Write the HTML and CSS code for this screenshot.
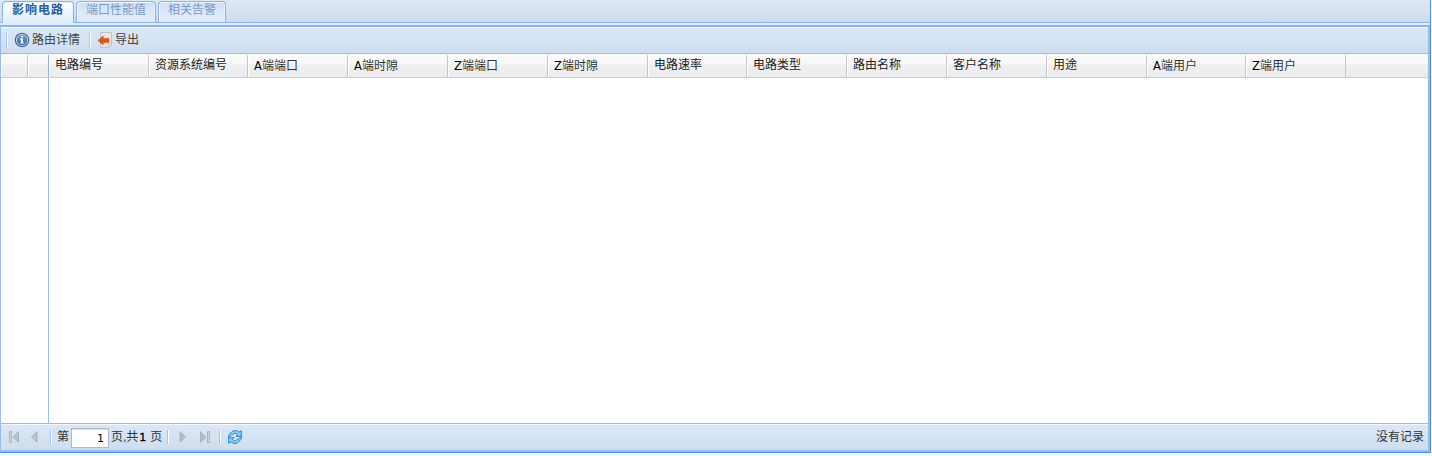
FILE: index.html
```html
<!DOCTYPE html>
<html lang="zh-CN">
<head>
<meta charset="utf-8">
<title>影响电路</title>
<link rel="stylesheet" href="styles.css">
</head>
<body>
<div class="window">
  <nav class="tabs">
    <div class="tab active">影响电路</div>
    <div class="tab t2">端口性能值</div>
    <div class="tab t3">相关告警</div>
  </nav>
  <div class="strip"></div>
  <main class="panel">
    <div class="toolbar">
      <i class="sep first"></i>
      <svg class="info" width="16" height="16" viewBox="0 0 16 16">
        <defs><linearGradient id="ig" x1="0" y1="0" x2="0" y2="1"><stop offset="0" stop-color="#6f9bc8"/><stop offset="1" stop-color="#3a70a8"/></linearGradient></defs>
        <circle cx="8" cy="8" r="6.7" fill="#c3d6e9" stroke="#3e689a" stroke-width="1.1"/>
        <circle cx="8" cy="8" r="5.2" fill="url(#ig)"/>
        <path d="M7 4h2v1.600H7zM6.200 6.600H9V10.500h.9v1.100H6.200v-1.100H7V7.700h-.8z" fill="#fff"/>
      </svg>
      <span class="label">路由详情</span>
      <i class="sep second"></i>
      <svg class="export" width="16" height="16" viewBox="0 0 16 16">
        <path d="M3.500.5h11v11.500l-3 3.500h-8z" fill="#e9e6e4" stroke="#c2c0c0"/>
        <path d="M14.500 12h-3v3.500z" fill="#fff" stroke="#b4b3b2" stroke-width=".7"/>
        <path d="M1 8.500 6.200 4V6.500H12v4H6.200V13z" fill="#e0561c" stroke="#c64a1c" stroke-width=".5"/>
      </svg>
      <span class="label">导出</span>
    </div>
    <div class="head">
      <div class="th"></div><div class="th lock"></div>
      <div class="th">电路编号</div><div class="th">资源系统编号</div>
      <div class="th low"><span class="latin">A</span>端端口</div><div class="th low"><span class="latin">A</span>端时隙</div>
      <div class="th low"><span class="latin">Z</span>端端口</div><div class="th low"><span class="latin">Z</span>端时隙</div>
      <div class="th">电路速率</div><div class="th">电路类型</div>
      <div class="th">路由名称</div><div class="th">客户名称</div>
      <div class="th">用途</div><div class="th low"><span class="latin">A</span>端用户</div>
      <div class="th low"><span class="latin">Z</span>端用户</div>
    </div>
    <div class="body"><div class="locked"></div></div>
    <footer class="pager">
      <svg class="first-page" width="10" height="12" viewBox="0 0 10 12"><path d="M.5.5h2v11h-2z" fill="#d3d7dc" stroke="#a5aab0" stroke-width=".8"/><path d="M9.500.8v10.400L4 6z" fill="#bdc2c7" stroke="#a0a5ab" stroke-width=".7"/></svg>
      <svg class="prev-page" width="7" height="12" viewBox="0 0 7 12"><path d="M6 .8v10.400L.5 6z" fill="#bdc2c7" stroke="#a0a5ab" stroke-width=".7"/></svg>
      <i class="sep p1"></i>
      <span class="di">第</span>
      <input class="page" value="1">
      <span class="total">页,共<b>1</b>页</span>
      <i class="sep p2"></i>
      <svg class="next-page" width="7" height="12" viewBox="0 0 7 12"><path d="M1 .8v10.400L6.500 6z" fill="#b9bec3" stroke="#a0a5ab" stroke-width=".7"/></svg>
      <svg class="last-page" width="10" height="12" viewBox="0 0 10 12"><path d="M7.500.5h2v11h-2z" fill="#d3d7dc" stroke="#a5aab0" stroke-width=".8"/><path d="M.5.8v10.400L6 6z" fill="#b9bec3" stroke="#a0a5ab" stroke-width=".7"/></svg>
      <i class="sep p3"></i>
      <svg class="refresh" width="14" height="14" viewBox="0 0 14 14">
        <g fill="#8fcdf8" stroke="#2784d6" stroke-width="1" stroke-linejoin="round">
          <path d="M3 2.800C5-.1 9 0 11 2.200L13.300.8V6.300H8L9.600 4.500C8 2.700 5.800 3 4.800 4.600C3 4.800 1.800 6 1.500 8L.6 7.500C.5 5.200 1.300 3.500 3 2.800z"/>
          <path d="M11 11.200C9 14.100 5 14 3 11.800L.7 13.200V7.700H6L4.400 9.500C6 11.300 8.200 11 9.200 9.400C11 9.200 12.200 8 12.500 6L13.400 6.500C13.500 8.800 12.700 10.500 11 11.200z"/>
        </g>
      </svg>
      <span class="empty">没有记录</span>
    </footer>
  </main>
</div>
</body>
</html>
```
FILE: styles.css
```css
* { box-sizing: border-box; }
body {
  margin: 0;
  height: 456px;
  overflow: hidden;
  background: #eff6fc;
  font: 12px/16px "Liberation Sans", "Noto Sans CJK SC", sans-serif;
  color: #333;
}
.window {
  width: 1431px;
  height: 453px;
  display: flex;
  flex-direction: column;
  border-right: 1px solid #4b90d0;
  border-bottom: 1px solid #4b90d0;
}
.tabs {
  height: 23px;
  display: flex;
  align-items: flex-end;
  gap: 2px;
  padding-left: 2px;
  background: linear-gradient(#dde8f5, #cbdbef);
  border-bottom: 1px solid #8db2e3;
}
.tab {
  height: 21px;
  border: 1px solid #8db2e3;
  border-bottom: 0;
  border-radius: 4px 4px 0 0;
  box-shadow: inset 1px 1px 0 #edf4fd, inset -1px 0 0 #e6effb;
  background: linear-gradient(#cfdff4, #dee9fb 60%, #deebfd);
  color: #7b98c4;
  text-align: center;
  line-height: 16px;
}
.tab.active {
  width: 72px;
  height: 22px;
  margin-bottom: -1px;
  background: linear-gradient(#fff, #deecfd);
  color: #2a5f9f;
  font-weight: bold;
  letter-spacing: 1px;
  line-height: 17px;
}
.t2 { width: 80px; }
.t3 { width: 68px; }
.strip { height: 2px; background: #deecfd; }
.panel {
  flex: 1;
  display: flex;
  flex-direction: column;
  border: solid #99bce8;
  border-width: 2px 2px 2px 1px;
  border-top-color: #8fb4e3;
}
.toolbar {
  height: 27px;
  display: flex;
  align-items: center;
  padding-bottom: 1px;
  border-top: 1px solid #f3f8fd;
  border-bottom: 1px solid #99bce8;
  background: linear-gradient(#dbe7f5, #cedeef);
}
.sep {
  flex: none;
  width: 2px;
  height: 14px;
  border-left: 1px solid #98c8ff;
  border-right: 1px solid #fff;
}
.first { margin-left: 5px; }
.info { margin-left: 6px; }
.label { margin-left: 2px; color: #444; }
.second { margin-left: 9px; }
.export { margin-left: 6px; }
.export + .label { margin-left: 2px; }
.head {
  height: 24px;
  display: grid;
  grid-template-columns: 27px 21px 100px 99px 100px 100px 100px 100px 99px 100px 100px 100px 100px 99px 100px;
  padding-top: 1px;
  background: linear-gradient(#fafafa 0, #f7f7f7 45%, #f0f0f1 46%, #ebecee);
  border-bottom: 1px solid #d0d0d0;
}
.th {
  border-right: 1px solid #c8c8c8;
  border-left: 1px solid #fff;
  padding-left: 5px;
  line-height: 20px;
  white-space: nowrap;
  color: #222;
}
.th.low { line-height: 22px; color: #333; }
.latin { font: 11.5px/16px "DejaVu Sans", sans-serif; color: #000; }
.th.lock { border-right-color: #8db2e3; }
.body { flex: 1; background: #fff; display: flex; }
.locked { width: 48px; border-right: 1px solid #99bce8; }
.pager {
  height: 27px;
  display: flex;
  align-items: center;
  border-top: 1px solid #99bce8;
  box-shadow: inset 0 1px 0 #f3f8fd;
  background: linear-gradient(#dbe7f5, #cedeef);
  padding-right: 4px;
}
.first-page { margin-left: 8px; }
.prev-page { margin-left: 12px; }
.p1 { margin-left: 12px; }
.di { margin-left: 5px; }
.page {
  width: 38px;
  height: 20px;
  margin: 2px 0 0 2px;
  padding: 1px 4px 0;
  border: 1px solid #b5b8c8;
  box-shadow: inset 0 1px 1px #ddd;
  background: #fff;
  font: 11px "DejaVu Sans", sans-serif;
  color: #000;
  text-align: right;
}
.total { width: 56px; margin-left: 2px; white-space: nowrap; }
.total b { margin: 0 4px 0 1px; font: 11px "DejaVu Sans", sans-serif; color: #000; -webkit-text-stroke: .3px #000; }
.next-page { margin-left: 10px; }
.last-page { margin-left: 14px; }
.p3 { margin-left: 9px; }
.refresh { margin-left: 7px; }
.empty { margin-left: auto; }
```
